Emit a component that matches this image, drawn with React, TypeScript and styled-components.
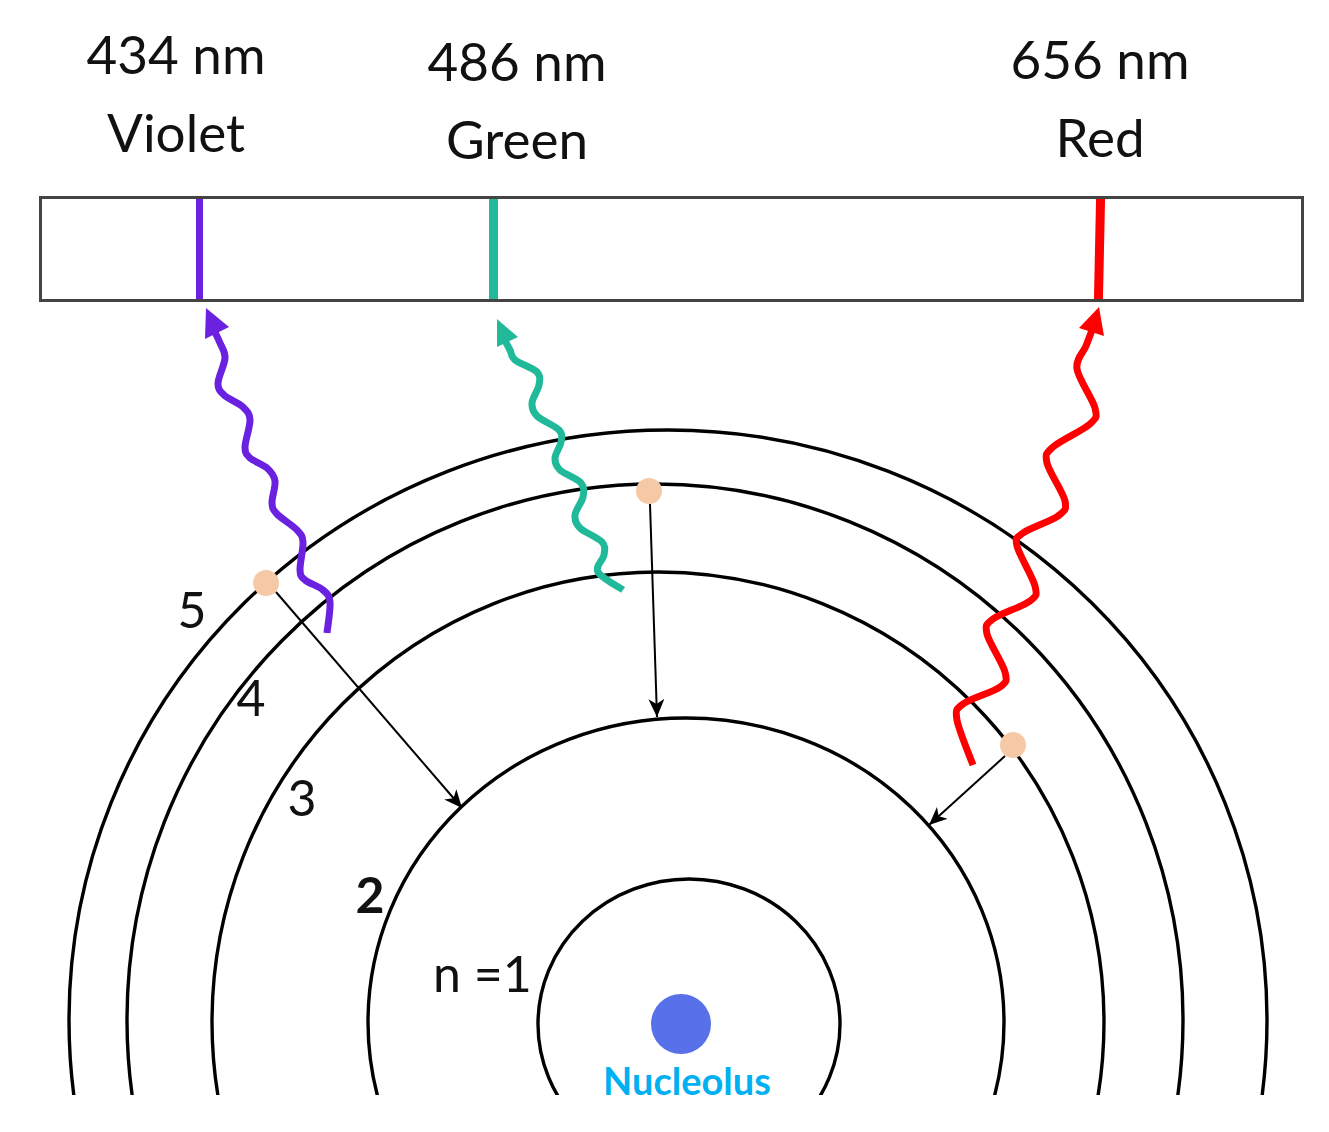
import React from 'react';
import styled, { createGlobalStyle } from 'styled-components';

const GlobalStyle = createGlobalStyle`
  html, body {
    margin: 0;
    padding: 0;
    background: #ffffff;
  }
  body {
    font-family: 'Lato', 'Open Sans', sans-serif;
  }
`;

const Figure = styled.div`
  width: 1329px;
  height: 1132px;
  display: flex;
  flex-direction: column;
  background: #ffffff;
  overflow: hidden;
`;

const LabelRow = styled.div`
  position: relative;
  height: 196px;
  flex: none;
`;

const Label = styled.div<{ $x: number; $y: number }>`
  position: absolute;
  left: ${(p) => p.$x}px;
  top: ${(p) => p.$y}px;
  transform: translateX(-50%);
  display: flex;
  flex-direction: column;
  align-items: center;
  gap: 12px;
  font-family: 'Lato', 'Open Sans', sans-serif;
  font-size: 53px;
  line-height: 66px;
  color: #111;
  white-space: nowrap;
`;

const SpectrumBar = styled.div`
  position: relative;
  box-sizing: border-box;
  margin-left: 39px;
  width: 1265px;
  height: 106px;
  flex: none;
  border: 3px solid #444444;
`;

const SpectrumLine = styled.div<{ $x: number; $w: number; $color: string; $tilt?: number }>`
  position: absolute;
  top: 0;
  bottom: 0;
  left: ${(p) => p.$x - 42 - p.$w / 2}px;
  width: ${(p) => p.$w}px;
  background: ${(p) => p.$color};
  transform: rotate(${(p) => p.$tilt ?? 0}deg);
`;

const AtomSvg = styled.svg`
  display: block;
  flex: none;
  margin-top: -1px;
`;

const ShellLabel = styled.text<{ $bold?: boolean }>`
  font-family: 'Lato', 'Open Sans', sans-serif;
  font-size: 50px;
  font-weight: ${(p) => (p.$bold ? 700 : 400)};
  fill: #111;
`;

const NucleusCaption = styled.text`
  font-family: 'Lato', 'Open Sans', sans-serif;
  font-size: 38px;
  font-weight: 700;
  fill: #00b0f0;
`;

const VIOLET = '#6a22e0';
const GREEN = '#20b999';
const RED = '#ff0000';

const lines = [
  { name: 'Violet', nm: '434 nm', x: 176, y: 21, lineX: 199, w: 7, color: VIOLET, tilt: 0 },
  { name: 'Green', nm: '486 nm', x: 517, y: 28, lineX: 493, w: 9, color: GREEN, tilt: 0 },
  { name: 'Red', nm: '656 nm', x: 1100, y: 26, lineX: 1099, w: 9, color: RED, tilt: 1.2 },
];

// shells, drawn as slightly squashed ellipses like the original sketch
const shells = [
  { cx: 689, cy: 1024, rx: 151, ry: 145 },
  { cx: 686, cy: 1022, rx: 318, ry: 304 },
  { cx: 658, cy: 1022, rx: 446, ry: 450 },
  { cx: 655, cy: 1020, rx: 528, ry: 536 },
  { cx: 668, cy: 1020, rx: 599, ry: 590 },
];

type Pt = [number, number];

// catmull-rom through the points, as cubic beziers
function smoothPath(pts: Pt[]) {
  let d = `M${pts[0][0]},${pts[0][1]}`;
  for (let i = 0; i < pts.length - 1; i++) {
    const p0 = pts[i - 1] || pts[i];
    const p1 = pts[i];
    const p2 = pts[i + 1];
    const p3 = pts[i + 2] || p2;
    const c1x = p1[0] + (p2[0] - p0[0]) / 6;
    const c1y = p1[1] + (p2[1] - p0[1]) / 6;
    const c2x = p2[0] - (p3[0] - p1[0]) / 6;
    const c2y = p2[1] - (p3[1] - p1[1]) / 6;
    d += ` C${c1x.toFixed(1)},${c1y.toFixed(1)} ${c2x.toFixed(1)},${c2y.toFixed(1)} ${p2[0]},${p2[1]}`;
  }
  return d;
}

const photons = [
  {
    color: VIOLET,
    head: '206,308 229,327 205,339',
    pts: [
      [212, 326], [220, 343], [225, 358], [218, 383], [224, 395], [243, 407], [250, 420],
      [245, 447], [250, 458], [267, 468], [275, 481], [272, 503], [277, 514], [297, 530],
      [303, 542], [300, 570], [305, 580], [323, 590], [330, 602], [327, 633],
    ] as Pt[],
  },
  {
    color: GREEN,
    head: '497,319 518,337 497,347',
    pts: [
      [503, 337], [510, 350], [515, 360], [537, 372], [539, 385], [532, 403], [537, 416],
      [559, 430], [561, 442], [555, 458], [560, 470], [581, 483], [583, 497], [575, 515],
      [580, 528], [602, 542], [604, 555], [598, 572], [623, 590],
    ] as Pt[],
  },
  {
    color: RED,
    head: '1099,307 1079,328 1104,336',
    pts: [
      [1092, 330], [1086, 346], [1077, 369], [1095, 408], [1090, 424], [1053, 447],
      [1047, 463], [1065, 501], [1058, 516], [1023, 533], [1017, 546], [1035, 586],
      [1030, 601], [993, 619], [987, 634], [1005, 672], [1000, 687], [963, 704],
      [957, 720], [973, 765],
    ] as Pt[],
  },
];

const electrons: Pt[] = [
  [266, 583],
  [649, 491],
  [1013, 745],
];

const jumps = [
  { from: [276, 592], to: [462, 808] },
  { from: [650, 504], to: [657, 717] },
  { from: [1005, 756], to: [929, 825] },
];

const shellLabels = [
  { text: '5', x: 192, y: 628, bold: false, anchor: 'middle' },
  { text: '4', x: 251, y: 716, bold: false, anchor: 'middle' },
  { text: '3', x: 302, y: 816, bold: false, anchor: 'middle' },
  { text: '2', x: 370, y: 913, bold: true, anchor: 'middle' },
  { text: 'n =1', x: 433, y: 992, bold: false, anchor: 'start' },
];

const Atom = () => (
  <AtomSvg width={1329} height={831} viewBox="0 301 1329 831">
    <defs>
      <clipPath id="shellClip">
        <rect x={0} y={301} width={1329} height={794} />
      </clipPath>
      <marker
        id="jumpHead"
        markerUnits="userSpaceOnUse"
        markerWidth={20}
        markerHeight={16}
        refX={18}
        refY={8}
        orient="auto"
      >
        <path d="M0,0 L18,8 L0,16 L5,8 Z" fill="#000" />
      </marker>
    </defs>

    <g clipPath="url(#shellClip)" fill="none" stroke="#000" strokeWidth={3.4}>
      {shells.map((s, i) => (
        <ellipse key={i} cx={s.cx} cy={s.cy} rx={s.rx} ry={s.ry} />
      ))}
    </g>

    {jumps.map((j, i) => (
      <line
        key={i}
        x1={j.from[0]}
        y1={j.from[1]}
        x2={j.to[0]}
        y2={j.to[1]}
        stroke="#000"
        strokeWidth={2}
        markerEnd="url(#jumpHead)"
      />
    ))}

    {photons.map((p, i) => (
      <g key={i}>
        <path
          d={smoothPath(p.pts)}
          fill="none"
          stroke={p.color}
          strokeWidth={7}
          strokeLinejoin="round"
        />
        <polygon points={p.head} fill={p.color} />
      </g>
    ))}

    {electrons.map(([x, y], i) => (
      <circle key={i} cx={x} cy={y} r={13} fill="#f6c9a6" />
    ))}

    {shellLabels.map((l) => (
      <ShellLabel key={l.text} x={l.x} y={l.y} textAnchor={l.anchor} $bold={l.bold}>
        {l.text}
      </ShellLabel>
    ))}

    <circle cx={681} cy={1024} r={30} fill="#5870e8" />
    <NucleusCaption x={687} y={1095} textAnchor="middle">
      Nucleolus
    </NucleusCaption>
  </AtomSvg>
);

const App = () => {
  return (
    <>
      <GlobalStyle />
      <Figure>
        <LabelRow>
          {lines.map((l) => (
            <Label key={l.name} $x={l.x} $y={l.y}>
              <span>{l.nm}</span>
              <span>{l.name}</span>
            </Label>
          ))}
        </LabelRow>
        <SpectrumBar>
          {lines.map((l) => (
            <SpectrumLine key={l.name} $x={l.lineX} $w={l.w} $color={l.color} $tilt={l.tilt} />
          ))}
        </SpectrumBar>
        <Atom />
      </Figure>
    </>
  );
};

export default App;
